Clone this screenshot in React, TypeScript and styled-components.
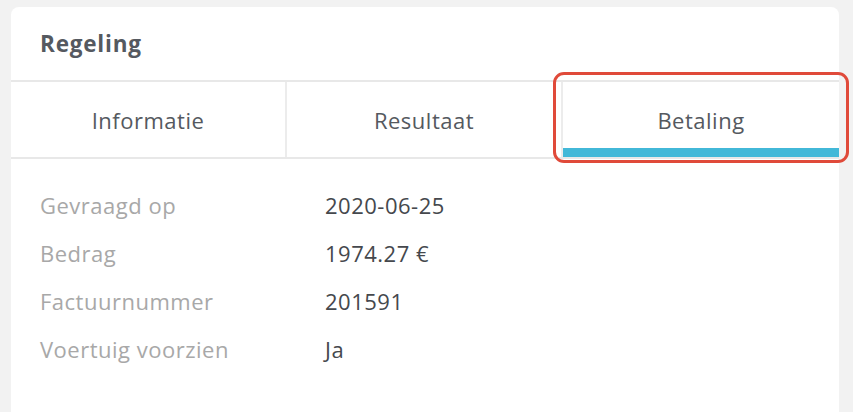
import { Fragment } from 'react'
import styled, { createGlobalStyle } from 'styled-components'

const Global = createGlobalStyle`
  html, body {
    margin: 0;
    padding: 0;
    background: #f2f2f2;
  }
  body {
    font-family: "Open Sans", "Noto Sans", sans-serif;
    overflow: hidden;
  }
`

const Page = styled.div`
  padding: 7px 14px 0 11px;
  height: 412px;
  box-sizing: border-box;
`

const Card = styled.div`
  background: #fff;
  border-radius: 8px 8px 0 0;
  height: 420px;
`

const Header = styled.div`
  height: 73px;
  display: flex;
  align-items: center;
  padding-left: 29px;
  border-bottom: 2px solid #e8e8e8;
  font-size: 22.5px;
  font-weight: 700;
  letter-spacing: 0.8px;
  color: #555960;
`

const Tabs = styled.div`
  display: grid;
  grid-template-columns: 274px 276px 1fr;
  border-bottom: 2px solid #e8e8e8;
`

const Tab = styled.div<{ $active?: boolean; $first?: boolean }>`
  position: relative;
  height: 75px;
  display: flex;
  align-items: center;
  justify-content: center;
  font-size: 22px;
  letter-spacing: 0.5px;
  color: #555960;
  border-left: ${p => (p.$first ? 'none' : '2px solid #ececec')};
  box-sizing: border-box;

  &::after {
    content: '';
    display: ${p => (p.$active ? 'block' : 'none')};
    position: absolute;
    left: 0;
    right: 0;
    bottom: 0;
    height: 9px;
    background: #42b8d8;
  }
`

const Highlight = styled.div`
  position: absolute;
  left: -10px;
  top: -10px;
  width: 296px;
  height: 91px;
  border: 3px solid #e04a3a;
  border-radius: 11px;
  box-sizing: border-box;
  pointer-events: none;
`

const Details = styled.div`
  padding: 22px 0 0 29px;
  display: grid;
  grid-template-columns: 285px 1fr;
`

const Label = styled.div`
  height: 48px;
  display: flex;
  align-items: center;
  font-size: 22px;
  letter-spacing: 0.5px;
  color: #a8a8a8;
`

const Value = styled(Label)`
  color: #45484d;
`

const rows = [
  ['Gevraagd op', '2020-06-25'],
  ['Bedrag', '1974.27 €'],
  ['Factuurnummer', '201591'],
  ['Voertuig voorzien', 'Ja'],
]

export default function App() {
  return (
    <Page>
      <Global />
      <Card>
        <Header>Regeling</Header>
        <Tabs>
          <Tab $first>Informatie</Tab>
          <Tab>Resultaat</Tab>
          <Tab $active>
            Betaling
            <Highlight />
          </Tab>
        </Tabs>
        <Details>
          {rows.map(([l, v]) => (
            <Fragment key={l}>
              <Label>{l}</Label>
              <Value>{v}</Value>
            </Fragment>
          ))}
        </Details>
      </Card>
    </Page>
  )
}
